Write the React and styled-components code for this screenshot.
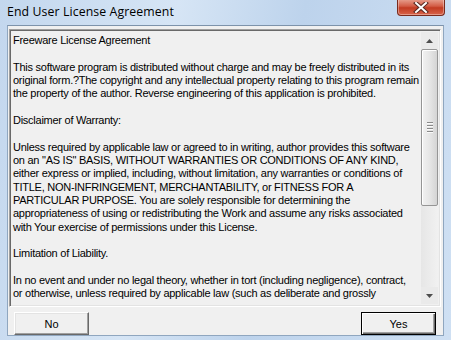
import React from 'react';
import styled, { createGlobalStyle } from 'styled-components';

const GlobalStyle = createGlobalStyle`
  html, body {
    margin: 0;
    padding: 0;
    background: #c9dcf0;
  }
`;

const lines = [
  'Freeware License Agreement',
  '',
  'This software program is distributed without charge and may be freely distributed in its',
  'original form.?The copyright and any intellectual property relating to this program remain',
  'the property of the author. Reverse engineering of this application is prohibited.',
  '',
  'Disclaimer of Warranty:',
  '',
  'Unless required by applicable law or agreed to in writing, author provides this software',
  'on an "AS IS" BASIS, WITHOUT WARRANTIES OR CONDITIONS OF ANY KIND,',
  'either express or implied, including, without limitation, any warranties or conditions of',
  'TITLE, NON-INFRINGEMENT, MERCHANTABILITY, or FITNESS FOR A',
  'PARTICULAR PURPOSE. You are solely responsible for determining the',
  'appropriateness of using or redistributing the Work and assume any risks associated',
  'with Your exercise of permissions under this License.',
  '',
  'Limitation of Liability.',
  '',
  'In no event and under no legal theory, whether in tort (including negligence), contract,',
  'or otherwise, unless required by applicable law (such as deliberate and grossly',
];

export default function App() {
  return (
    <>
      <GlobalStyle />
      <Window>
        <TitleBar>
          <Title>End User License Agreement</Title>
          <CloseButton>
            <svg width="16" height="11" viewBox="0 0 16 11">
              <path d="M3 1 L13 10 M13 1 L3 10" stroke="#5a2a22" strokeWidth="4" strokeLinecap="square" />
              <path d="M3 1 L13 10 M13 1 L3 10" stroke="#ffffff" strokeWidth="2" strokeLinecap="square" />
            </svg>
          </CloseButton>
        </TitleBar>
        <Client>
          <TextBox>
            <TextArea>
              {lines.map((l, i) => (
                <Line key={i}>{l || '\u00a0'}</Line>
              ))}
            </TextArea>
            <ScrollBar>
              <Arrow>
                <svg width="7" height="4" viewBox="0 0 7 4"><path d="M0 4 L3.5 0 L7 4 Z" fill="#4d4d4d" /></svg>
              </Arrow>
              <Track>
                <Thumb>
                  <Grip />
                  <Grip />
                  <Grip />
                  <Grip />
                </Thumb>
              </Track>
              <Arrow>
                <svg width="7" height="4" viewBox="0 0 7 4"><path d="M0 0 L3.5 4 L7 0 Z" fill="#4d4d4d" /></svg>
              </Arrow>
            </ScrollBar>
          </TextBox>
          <ButtonRow>
            <Button>No</Button>
            <Button $default>Yes</Button>
          </ButtonRow>
        </Client>
      </Window>
    </>
  );
}

const Window = styled.div`
  width: 451px;
  height: 340px;
  display: flex;
  flex-direction: column;
  background: linear-gradient(100deg, #c3d7ee 0%, #d6e5f5 35%, #bdd3ec 60%, #cfe0f3 100%);
  box-sizing: border-box;
`;

const TitleBar = styled.div`
  height: 25px;
  display: flex;
  justify-content: space-between;
  align-items: flex-start;
  padding-left: 7px;
  padding-right: 6px;
  flex-shrink: 0;
`;

const Title = styled.div`
  font-family: 'Open Sans', 'Noto Sans', sans-serif;
  font-size: 12.3px;
  color: #000;
  margin-top: 3px;
  letter-spacing: 0.1px;
`;

const CloseButton = styled.div`
  width: 46px;
  height: 16px;
  margin-top: -1px;
  border: 1px solid #7a2a1c;
  border-top: none;
  border-radius: 0 0 4px 4px;
  background: linear-gradient(#e8a392 0%, #d35c45 45%, #c23b22 55%, #d8644a 100%);
  box-shadow: inset 0 0 0 1px rgba(255, 255, 255, 0.35);
  display: flex;
  align-items: center;
  justify-content: center;
`;

const Client = styled.div`
  flex: 1;
  margin: 0 7px 7px 7px;
  background: #f0f0f0;
  border: 1px solid #8fa6bf;
  border-top-color: #7d93ab;
  display: flex;
  flex-direction: column;
  padding: 3px 2px 0 1px;
`;

const TextBox = styled.div`
  height: 272px;
  display: flex;
  border: 1px solid;
  border-color: #a0a0a0 #ffffff #ffffff #a0a0a0;
  box-shadow: inset 1px 1px 0 #696969, inset -1px -1px 0 #e3e3e3;
  padding: 2px 2px 2px 2px;
  background: #f0f0f0;
`;

const TextArea = styled.div`
  flex: 1;
  padding: 2px 0 0 1px;
  overflow: hidden;
`;

const Line = styled.div`
  font-family: 'Liberation Sans', Arial, sans-serif;
  font-size: 11px;
  letter-spacing: -0.26px;
  line-height: 13.33px;
  color: #000;
  white-space: nowrap;
`;

const ScrollBar = styled.div`
  width: 17px;
  display: flex;
  flex-direction: column;
  background: #eaeaea;
`;

const Arrow = styled.div`
  height: 17px;
  display: flex;
  align-items: center;
  justify-content: center;
`;

const Track = styled.div`
  flex: 1;
  display: flex;
  flex-direction: column;
  background: linear-gradient(90deg, #e6e6e6, #f1f1f1);
`;

const Thumb = styled.div`
  height: 155px;
  border: 1px solid #959595;
  border-radius: 2px;
  background: linear-gradient(90deg, #f2f2f2 0%, #e6e6e6 50%, #d4d4d4 100%);
  box-shadow: inset 1px 1px 0 #ffffff;
  display: flex;
  flex-direction: column;
  align-items: center;
  justify-content: center;
  gap: 1px;
`;

const Grip = styled.div`
  width: 6px;
  height: 1px;
  background: #8a8a8a;
  border-bottom: 1px solid #fafafa;
`;

const ButtonRow = styled.div`
  display: flex;
  justify-content: space-between;
  padding: 5px 5px 0 5px;
`;

const Button = styled.div`
  width: 75px;
  height: 23px;
  box-sizing: border-box;
  display: flex;
  align-items: center;
  justify-content: center;
  font-family: 'Liberation Sans', Arial, sans-serif;
  font-size: 11px;
  color: #000;
  background: #f0f0f0;
  border: 1px solid;
  border-color: ${(p) => (p.$default ? '#000 #000 #000 #000' : '#ffffff #696969 #696969 #ffffff')};
  box-shadow: ${(p) =>
    p.$default
      ? 'inset 1px 1px 0 #ffffff, inset -1px -1px 0 #696969, inset -2px -2px 0 #a0a0a0'
      : 'inset -1px -1px 0 #a0a0a0, inset 1px 1px 0 #e3e3e3'};
`;
